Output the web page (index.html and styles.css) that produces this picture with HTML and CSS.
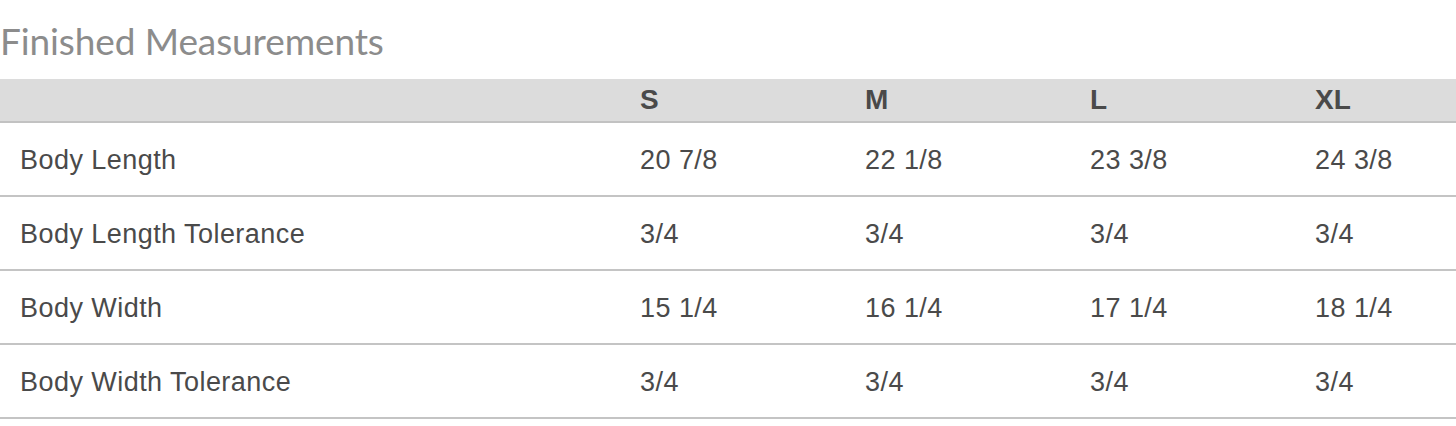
FILE: index.html
```html
<!DOCTYPE html>
<html lang="en">
<head>
<meta charset="utf-8">
<title>Finished Measurements</title>
<link rel="stylesheet" href="styles.css">
</head>
<body>
<section class="measurements">
  <h2 class="title">Finished Measurements</h2>
  <table class="size-table">
    <colgroup>
      <col class="col-label">
      <col class="col-size">
      <col class="col-size">
      <col class="col-size">
      <col class="col-last">
    </colgroup>
    <thead>
      <tr>
        <th></th>
        <th>S</th>
        <th>M</th>
        <th>L</th>
        <th>XL</th>
      </tr>
    </thead>
    <tbody>
      <tr>
        <td>Body Length</td>
        <td>20 7/8</td>
        <td>22 1/8</td>
        <td>23 3/8</td>
        <td>24 3/8</td>
      </tr>
      <tr>
        <td>Body Length Tolerance</td>
        <td>3/4</td>
        <td>3/4</td>
        <td>3/4</td>
        <td>3/4</td>
      </tr>
      <tr>
        <td>Body Width</td>
        <td>15 1/4</td>
        <td>16 1/4</td>
        <td>17 1/4</td>
        <td>18 1/4</td>
      </tr>
      <tr>
        <td>Body Width Tolerance</td>
        <td>3/4</td>
        <td>3/4</td>
        <td>3/4</td>
        <td>3/4</td>
      </tr>
    </tbody>
  </table>
</section>
</body>
</html>
```

FILE: styles.css
```css
html, body {
  margin: 0;
  padding: 0;
  background: #ffffff;
}

.measurements {
  padding-top: 21px;
}

.title {
  margin: 0 0 18px 0;
  font-family: "Lato", "Open Sans", sans-serif;
  font-weight: 400;
  font-size: 37px;
  letter-spacing: -0.1px;
  line-height: 40px;
  color: #8c8c8c;
}

.size-table {
  width: 1456px;
  border-collapse: collapse;
  table-layout: fixed;
  font-family: "Liberation Sans", Arial, sans-serif;
  color: #4a4a4a;
}

.col-label { width: 620px; }
.col-size { width: 225px; }
.col-last { width: 161px; }

.size-table th {
  background: #dcdcdc;
  height: 42px;
  padding: 0 0 0 20px;
  text-align: left;
  font-weight: 700;
  font-size: 28px;
  line-height: 42px;
  border-bottom: 2px solid #c2c2c2;
  vertical-align: middle;
}

.size-table td {
  height: 71px;
  padding: 1px 0 0 20px;
  font-size: 27px;
  letter-spacing: 0.45px;
  line-height: 30px;
  border-bottom: 2px solid #c4c4c4;
  vertical-align: middle;
}
```
